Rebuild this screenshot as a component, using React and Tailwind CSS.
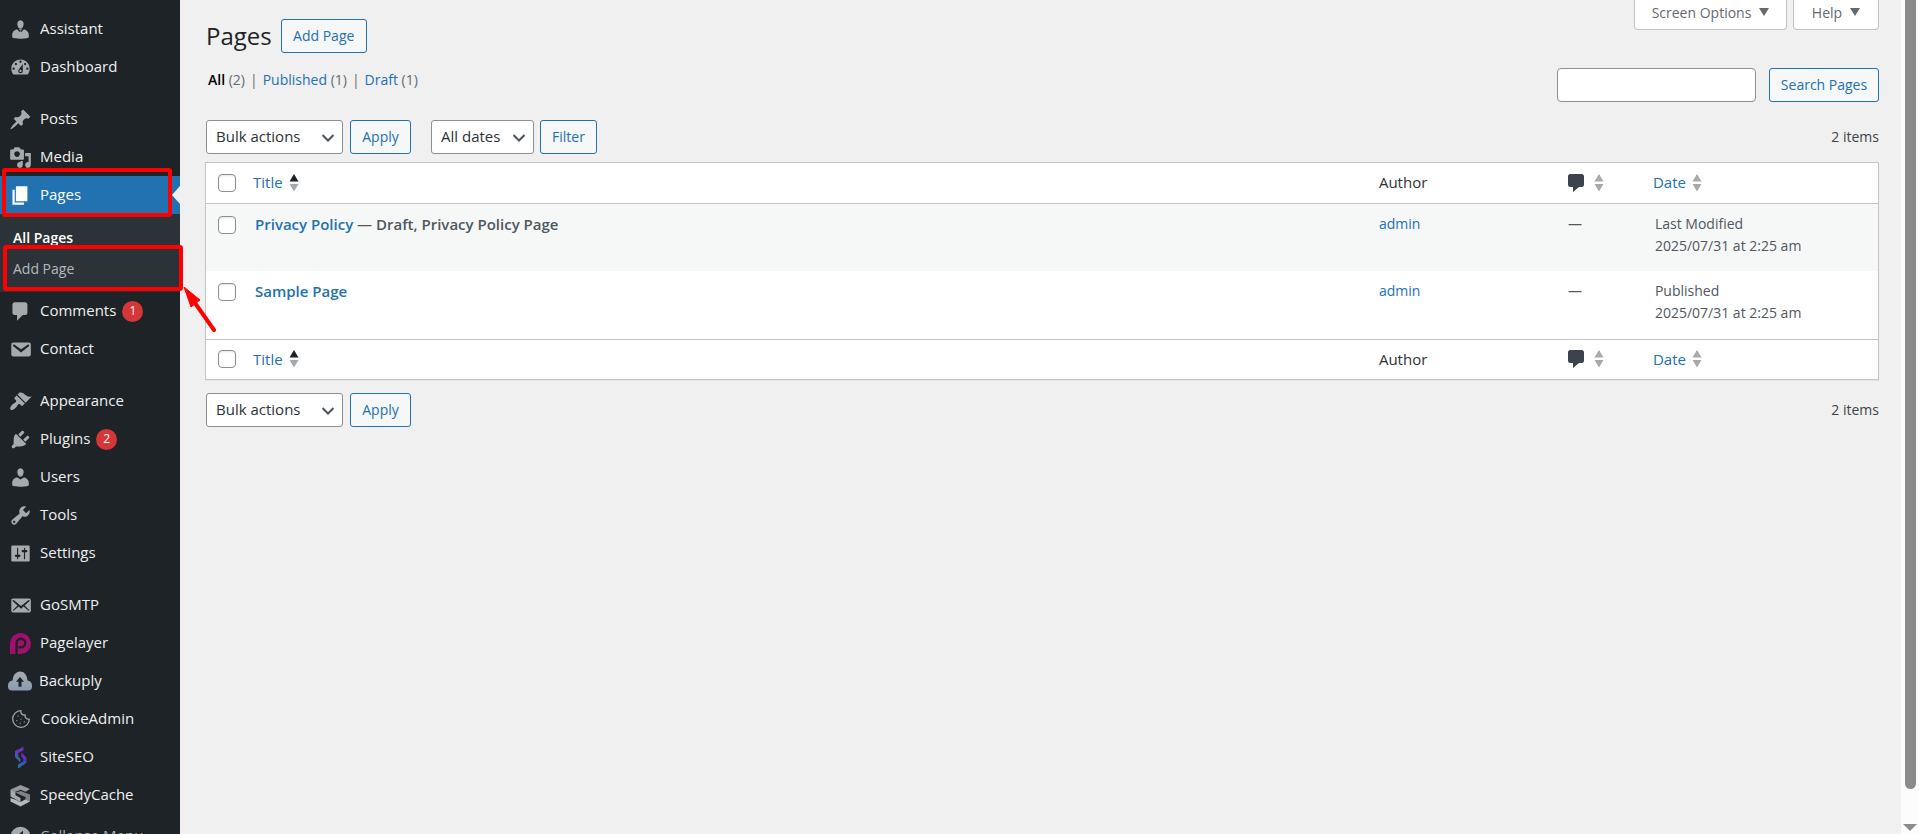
import React, { useState } from 'react';
import { Cookie } from 'lucide-react';

const iconPaths = {
  assistant:
    'M10 9.25c-2.27 0-2.73-3.44-2.73-3.44C7 4.02 7.82 2 9.97 2c2.16 0 2.98 2.02 2.71 3.81 0 0-.41 3.44-2.68 3.44zM7.2 10.05L9.3 12.2l.7-.6.7.6 2.1-2.15c2.3 0 4.44 2.28 4.44 4.48v2.49s-3.65 1.13-7.24 1.13c-3.65 0-7.24-1.13-7.24-1.13v-2.49c0-2.25 1.94-4.48 4.44-4.48zM8.6 9.9L10 11l1.4-1.1-.6-.2H9.2z',
  dashboard:
    'M3.76 16h12.48c1.1-1.37 1.76-3.11 1.76-5 0-4.42-3.58-8-8-8s-8 3.58-8 8c0 1.89.66 3.63 1.76 5zM10 4c.55 0 1 .45 1 1s-.45 1-1 1-1-.45-1-1 .45-1 1-1zM6 6c.55 0 1 .45 1 1s-.45 1-1 1-1-.45-1-1 .45-1 1-1zm8 0c.55 0 1 .45 1 1s-.45 1-1 1-1-.45-1-1 .45-1 1-1zm-5.37 5.55L12 7v6c0 1.1-.9 2-2 2s-2-.9-2-2c0-.57.24-1.08.63-1.45zM4 10c.55 0 1 .45 1 1s-.45 1-1 1-1-.45-1-1 .45-1 1-1zm12 0c.55 0 1 .45 1 1s-.45 1-1 1-1-.45-1-1 .45-1 1-1zm-5 3c0-.55-.45-1-1-1s-1 .45-1 1 .45 1 1 1 1-.45 1-1z',
  posts:
    'M10.44 3.02l1.82-1.82 6.36 6.35-1.83 1.82c-1.05-.68-2.48-.57-3.41.36l-.75.75c-.92.93-1.04 2.35-.35 3.41l-1.83 1.82-2.41-2.41-2.8 2.79c-.42.42-3.38 2.71-3.8 2.29s1.86-3.39 2.28-3.81l2.79-2.79L4.1 9.36l1.83-1.82c1.05.69 2.48.57 3.4-.36l.75-.75c.93-.92 1.05-2.35.36-3.41z',
  media:
    'M13 11V4c0-.55-.45-1-1-1h-1.67L9 1H5L3.67 3H2c-.55 0-1 .45-1 1v7c0 .55.45 1 1 1h10c.55 0 1-.45 1-1zM7 4.5c1.38 0 2.5 1.12 2.5 2.5S8.38 9.5 7 9.5 4.5 8.38 4.5 7 5.62 4.5 7 4.5zM14 6h5v10.5c0 1.38-1.12 2.5-2.5 2.5S14 17.88 14 16.5s1.12-2.5 2.5-2.5c.17 0 .34.02.5.05V9h-3V6zm-4 8.05V13h2v3.5c0 1.38-1.12 2.5-2.5 2.5S7 17.88 7 16.5 8.12 14 9.5 14c.17 0 .34.02.5.05z',
  pages: 'M6 15V2h10v13H6zm-1 1h8v2H3V5h2v11z',
  comments: 'M5 2h9c1.1 0 2 .9 2 2v7c0 1.1-.9 2-2 2h-2l-5 5v-5H5c-1.1 0-2-.9-2-2V4c0-1.1.9-2 2-2z',
  contact:
    'M3.87 4h13.25C18.37 4 19 4.59 19 5.79v8.42c0 1.19-.63 1.79-1.88 1.79H3.87c-1.25 0-1.88-.6-1.88-1.79V5.79c0-1.2.63-1.79 1.88-1.79zm6.62 8.6l6.74-5.53c.24-.2.43-.66.13-1.07-.29-.41-.82-.42-1.17-.17l-5.7 3.86L4.8 5.83c-.35-.25-.88-.24-1.17.17-.3.41-.11.87.13 1.07z',
  appearance:
    'M14.48 11.06L7.41 3.99l1.5-1.5c.5-.56 2.3-.47 3.51.32 1.21.8 1.43 1.28 2.91 2.1 1.18.64 2.45 1.26 4.45.85zm-.71.71L6.7 4.7 4.93 6.47c-.39.39-.39 1.02 0 1.41l1.06 1.06c.39.39.39 1.03 0 1.42-.6.6-1.43 1.11-2.21 1.69-.35.26-.7.53-1.01.84C1.43 14.23.4 16.08 1.4 17.07c.99 1 2.84-.03 4.18-1.36.31-.31.58-.66.85-1.02.57-.78 1.08-1.61 1.69-2.21.39-.39 1.02-.39 1.41 0l1.06 1.06c.39.39 1.02.39 1.41 0z',
  plugins:
    'M13.11 4.36L9.87 7.6 8 5.73l3.24-3.24c.35-.34 1.05-.2 1.56.32.52.51.66 1.21.31 1.55zm-8 1.77l.91-1.12 9.01 9.01-1.19.84c-.71.71-2.63 1.16-3.82 1.16H6.14L4.9 17.26c-.59.59-1.54.59-2.12 0-.59-.58-.59-1.53 0-2.12l1.24-1.24v-3.88c0-1.13.4-3.19 1.09-3.89zm7.26 3.97l3.24-3.24c.34-.35 1.04-.21 1.55.31.52.51.66 1.21.31 1.55l-3.24 3.25z',
  users:
    'M10 9.25c-2.27 0-2.73-3.44-2.73-3.44C7 4.02 7.82 2 9.97 2c2.16 0 2.98 2.02 2.71 3.81 0 0-.41 3.44-2.68 3.44zm0 2.57L12.72 10c2.39 0 4.52 2.33 4.52 4.53v2.49s-3.65 1.13-7.24 1.13c-3.65 0-7.24-1.13-7.24-1.13v-2.49c0-2.25 1.94-4.48 4.47-4.48z',
  tools:
    'M16.68 9.77c-1.34 1.34-3.3 1.67-4.95.99l-5.41 6.52c-.99.99-2.59.99-3.58 0s-.99-2.59 0-3.57l6.52-5.42c-.68-1.65-.35-3.61.99-4.95 1.28-1.28 3.12-1.62 4.72-1.06l-2.89 2.89 2.82 2.82 2.86-2.87c.53 1.58.18 3.39-1.08 4.65zM3.81 16.21c.4.39 1.04.39 1.43 0 .4-.4.4-1.04 0-1.43-.39-.4-1.03-.4-1.43 0-.39.39-.39 1.03 0 1.43z',
  settings:
    'M18 16V4c0-.55-.45-1-1-1H3c-.55 0-1 .45-1 1v12c0 .55.45 1 1 1h14c.55 0 1-.45 1-1zM8 11h1c.55 0 1 .45 1 1s-.45 1-1 1H8v1.5c0 .28-.22.5-.5.5s-.5-.22-.5-.5V13H6c-.55 0-1-.45-1-1s.45-1 1-1h1V5.5c0-.28.22-.5.5-.5s.5.22.5.5V11zm5-2h-1c-.55 0-1-.45-1-1s.45-1 1-1h1V5.5c0-.28.22-.5.5-.5s.5.22.5.5V7h1c.55 0 1 .45 1 1s-.45 1-1 1h-1v5.5c0 .28-.22.5-.5.5s-.5-.22-.5-.5V9z',
  gosmtp:
    'M19 14.5v-9c0-.83-.67-1.5-1.5-1.5H3.49c-.83 0-1.5.67-1.5 1.5v9c0 .83.67 1.5 1.5 1.5H17.5c.83 0 1.5-.67 1.5-1.5zm-1.31-9.11c.33.33.15.67-.03.84L13.6 9.95l3.9 4.06c.12.14.2.36.06.51-.13.16-.43.15-.56.05l-4.37-3.73-2.14 1.95-2.13-1.95-4.37 3.73c-.13.1-.43.11-.56-.05-.14-.15-.06-.37.06-.51l3.9-4.06-4.06-3.72c-.18-.17-.36-.51-.03-.84s.67-.17.95.07l6.24 5.04 6.25-5.04c.28-.24.62-.4.95-.07z',
  collapse: 'M10 1.5a8.5 8.5 0 1 0 0 17 8.5 8.5 0 0 0 0-17zM12.2 5v10L6.2 10z',
};

const Dashicon = ({ name }) => (
  <svg viewBox="0 0 20 20" className="w-[23px] h-[23px] shrink-0" fill="currentColor" fillRule="evenodd" aria-hidden="true">
    <path d={iconPaths[name]} />
  </svg>
);

const PagelayerIcon = () => (
  <svg viewBox="0 0 23 23" className="w-[23px] h-[23px] shrink-0" aria-hidden="true">
    <path d="M1 22V11.5a10.5 10.5 0 1 1 10.5 10.5z" fill="#a1106c" />
    <path d="M7.600 22.500V11a4.300 4.300 0 1 1 4.300 4.300H9.500" fill="none" stroke="#1d2327" strokeWidth="2.400" />
  </svg>
);

const BackuplyIcon = () => (
  <svg viewBox="0 0 24 24" className="w-6 h-6 -mx-px shrink-0" aria-hidden="true">
    <defs>
      <linearGradient id="backuply" x1="0" y1="0" x2="0" y2="1">
        <stop offset="0" stopColor="#a7aaad" />
        <stop offset="1" stopColor="#8c9bb0" />
      </linearGradient>
    </defs>
    <path
      d="M4 21.500a4 4 0 0 1-4-4V16c0-2.400 1.800-4.300 4.600-4.600C5 6 8 2.500 12 2.500s7.200 3.400 7.500 8.900c2.700.3 4.500 2.200 4.500 4.600v1.500a4 4 0 0 1-4 4z"
      fill="url(#backuply)"
    />
    <path d="M12 8l-4 4.700h2.500v5h3v-5H16z" fill="#1d2327" />
  </svg>
);

const SiteSeoIcon = () => (
  <svg viewBox="0 0 23 23" className="w-[23px] h-[23px] shrink-0" aria-hidden="true">
    <defs>
      <linearGradient id="seo-left" x1="0" y1="0" x2="0" y2="1">
        <stop offset="0" stopColor="#7b23b5" />
        <stop offset="1" stopColor="#1383a0" />
      </linearGradient>
      <linearGradient id="seo-right" x1="0" y1="0" x2="0" y2="1">
        <stop offset="0" stopColor="#8b22c0" />
        <stop offset=".5" stopColor="#4a35c4" />
        <stop offset="1" stopColor="#14909b" />
      </linearGradient>
    </defs>
    <path d="M14.500.500v3.800L9.300 7v3.500l2 2.500v3.500L6 11V5z" fill="url(#seo-left)" />
    <path d="M12.500 6.500l5 5.300v5L9 22.500v-4l5.200-3v-3l-2-2z" fill="url(#seo-right)" />
  </svg>
);

const SpeedyCacheIcon = () => (
  <svg viewBox="0 0 23 23" className="w-[23px] h-[23px] shrink-0" aria-hidden="true">
    <path d="M11.500 1L21 5l-4.500 2.800-5-2-5 2-5-2.300z" fill="#97999c" />
    <path d="M1.500 5.500l5 2.300v3.400L11.500 14v4L1.500 12.500z" fill="#a7aaad" />
    <path d="M6.500 8.500l5-1.500 9.500 3.500v7l-4.500-2.300V13l-5-2z" fill="#7f8286" />
    <path d="M1.500 14l5 1.800 5 2.200 5-2.800 4.500 2.300-9.500 5-10-5z" fill="#b6b8bb" />
  </svg>
);

const CookieIcon = () => <Cookie className="w-5 h-5 mx-0.5 shrink-0" strokeWidth={1.5} />;

const menuGroups = [
  [
    { label: 'Assistant', icon: <Dashicon name="assistant" /> },
    { label: 'Dashboard', icon: <Dashicon name="dashboard" /> },
  ],
  [
    { label: 'Posts', icon: <Dashicon name="posts" /> },
    { label: 'Media', icon: <Dashicon name="media" /> },
    { label: 'Pages', icon: <Dashicon name="pages" />, current: true },
    { label: 'Comments', icon: <Dashicon name="comments" />, count: 1 },
    { label: 'Contact', icon: <Dashicon name="contact" /> },
  ],
  [
    { label: 'Appearance', icon: <Dashicon name="appearance" /> },
    { label: 'Plugins', icon: <Dashicon name="plugins" />, count: 2 },
    { label: 'Users', icon: <Dashicon name="users" /> },
    { label: 'Tools', icon: <Dashicon name="tools" /> },
    { label: 'Settings', icon: <Dashicon name="settings" /> },
  ],
  [
    { label: 'GoSMTP', icon: <Dashicon name="gosmtp" /> },
    { label: 'Pagelayer', icon: <PagelayerIcon /> },
    { label: 'Backuply', icon: <BackuplyIcon /> },
    { label: 'CookieAdmin', icon: <CookieIcon /> },
    { label: 'SiteSEO', icon: <SiteSeoIcon /> },
    { label: 'SpeedyCache', icon: <SpeedyCacheIcon /> },
  ],
];

const rows = [
  { id: 1, title: 'Privacy Policy', state: 'Draft, Privacy Policy Page', author: 'admin', status: 'Last Modified', date: '2025/07/31 at 2:25 am' },
  { id: 2, title: 'Sample Page', author: 'admin', status: 'Published', date: '2025/07/31 at 2:25 am' },
];

const buttonClass = 'h-[34px] border border-[#2271b1] rounded-[3px] bg-[#f6f7f7] text-[#2271b1] text-sm whitespace-nowrap';

const PagesSubmenu = () => (
  <ul className="relative bg-[#2c3338] py-2 text-sm">
    <li>
      <a href="#all-pages" className="flex items-center h-[31px] px-[13px] font-semibold text-white">All Pages</a>
    </li>
    <li className="relative">
      <a href="#add-page" className="flex items-center h-[31px] px-[13px] text-[#b4b9be]">Add Page</a>
      <span className="absolute left-[3px] -right-[3px] -top-[8px] -bottom-[7px] border-4 border-[#ff0000] rounded-[3px] z-10 pointer-events-none" />
      <svg viewBox="0 0 34 46" className="absolute left-[182px] top-[34px] w-[34px] h-[46px] z-10 pointer-events-none" aria-hidden="true">
        <path d="M13 16l19 27" stroke="#ff0000" strokeWidth="4" strokeLinecap="round" />
        <path d="M2 0l16 13-9 7z" fill="#ff0000" stroke="#ff0000" strokeWidth="1" />
      </svg>
    </li>
  </ul>
);

const MenuItem = ({ item }) => (
  <li>
    <a
      href={`#${item.label.toLowerCase()}`}
      className={`relative flex items-center gap-2 h-[38px] pl-[9px] text-[15px] ${item.current ? 'bg-[#2271b1] text-white' : 'text-[#f0f0f1]'}`}
    >
      <span className={item.current ? 'text-white' : 'text-[#a7aaad]'}>{item.icon}</span>
      {item.label}
      {item.count && (
        <span className="flex items-center justify-center -ml-0.5 w-[21px] h-[21px] rounded-full bg-[#d63638] text-white text-xs">{item.count}</span>
      )}
      {item.current && (
        <>
          <svg viewBox="0 0 8 18" className="absolute right-0 top-2.5 w-2 h-[18px]" aria-hidden="true">
            <path d="M8 0v18L0 9z" fill="#f0f0f0" />
          </svg>
          <span className="absolute left-0.5 right-2 -top-2 -bottom-[3px] border-4 border-[#ff0000] rounded-[3px] z-10 pointer-events-none" />
        </>
      )}
    </a>
    {item.current && <PagesSubmenu />}
  </li>
);

const Sidebar = () => (
  <nav className="w-[180px] shrink-0 bg-[#1d2327] pt-2.5" aria-label="Main menu">
    {menuGroups.map((group, idx) => (
      <ul key={idx} className={idx > 0 ? 'mt-3.5' : ''}>
        {group.map((item) => (
          <MenuItem key={item.label} item={item} />
        ))}
      </ul>
    ))}
    <button className="flex items-center gap-2 h-11 pl-[9px] text-[15px] text-[#a7aaad]">
      <Dashicon name="collapse" />
      Collapse Menu
    </button>
  </nav>
);

const Dropdown = ({ label, options, className }) => (
  <div className={`relative ${className}`}>
    <select
      aria-label={label}
      className="appearance-none w-full h-[34px] pl-[9px] pr-6 border border-[#8c8f94] rounded-[3px] bg-white text-[#2c3338] text-[15px]"
    >
      {options.map((option) => (
        <option key={option}>{option}</option>
      ))}
    </select>
    <svg viewBox="0 0 12 8" className="absolute right-[9px] top-[14px] w-3 h-2 pointer-events-none" aria-hidden="true">
      <path d="M.5 1L6 6.500 11.500 1" fill="none" stroke="#50575e" strokeWidth="2" />
    </svg>
  </div>
);

const BulkActions = () => (
  <>
    <Dropdown label="Select bulk action" options={['Bulk actions', 'Edit', 'Move to Trash']} className="w-[137px]" />
    <button className={`${buttonClass} w-[61px] ml-[7px]`}>Apply</button>
  </>
);

const SortArrows = ({ active }) => (
  <svg viewBox="0 0 10 18" className="w-2.5 h-[18px]" aria-hidden="true">
    <path d="M5 0l4.500 7.500h-9z" fill={active ? '#1d2327' : '#a7aaad'} />
    <path d="M5 17.500L.5 10h9z" fill="#a7aaad" />
  </svg>
);

const Checkbox = ({ label, checked, onChange }) => (
  <input
    type="checkbox"
    aria-label={label}
    checked={checked}
    onChange={onChange}
    className="block appearance-none w-[18px] h-[18px] ml-3 border border-[#8c8f94] rounded-[4px] bg-white shadow-[inset_0_1px_2px_rgba(0,0,0,0.1)] checked:bg-[#2271b1]"
  />
);

const HeadingRow = ({ checked, onToggle }) => (
  <tr className="h-10 text-left text-[15px]">
    <td>
      <Checkbox label="Select all" checked={checked} onChange={onToggle} />
    </td>
    <th scope="col" className="pl-[9px] font-normal">
      <a href="#title" className="flex items-center gap-1.5 text-[#2271b1]">Title <SortArrows active /></a>
    </th>
    <th scope="col" className="pl-[11px] font-normal text-[#2c3338]">Author</th>
    <th scope="col" className="pl-[9px] font-normal">
      <a href="#comments-order" aria-label="Comments" className="flex items-center gap-2.5">
        <svg viewBox="0 0 16 18" className="w-4 h-[18px]" aria-hidden="true">
          <path d="M2.500 0h11A2.500 2.500 0 0 1 16 2.500v8a2.500 2.500 0 0 1-2.500 2.500H11l-6 5v-5H2.500A2.500 2.500 0 0 1 0 10.500v-8A2.500 2.500 0 0 1 2.500 0z" fill="#3c434a" />
        </svg>
        <SortArrows />
      </a>
    </th>
    <th scope="col" className="pl-[9px] font-normal">
      <a href="#date" className="flex items-center gap-1.5 text-[#2271b1]">Date <SortArrows /></a>
    </th>
  </tr>
);

const PagesTable = () => {
  const [selected, setSelected] = useState([]);
  const allSelected = selected.length === rows.length;

  const toggleAll = () => setSelected(allSelected ? [] : rows.map((row) => row.id));
  const toggleRow = (id) =>
    setSelected(selected.includes(id) ? selected.filter((item) => item !== id) : [...selected, id]);

  return (
    <div className="mt-2 -ml-px border border-[#c3c4c7] bg-white shadow-[0_1px_1px_rgba(0,0,0,0.04)]">
      <table className="w-full table-fixed border-collapse">
        <colgroup>
          <col className="w-[38px]" />
          <col />
          <col className="w-[191px]" />
          <col className="w-[85px]" />
          <col className="w-[14%]" />
        </colgroup>
        <thead className="border-b border-[#c3c4c7]">
          <HeadingRow checked={allSelected} onToggle={toggleAll} />
        </thead>
        <tbody>
          {rows.map((row) => (
            <tr key={row.id} className="h-[68px] align-top text-sm leading-[22px] text-[#50575e] odd:bg-[#f6f7f7]">
              <td className="pt-3">
                <Checkbox label={`Select ${row.title}`} checked={selected.includes(row.id)} onChange={() => toggleRow(row.id)} />
              </td>
              <td className="pt-[9px] pl-[11px] text-[15px] font-semibold">
                <a href={`#page-${row.id}`} className="text-[#2271b1]">{row.title}</a>
                {row.state && <span> — {row.state}</span>}
              </td>
              <td className="pt-[9px] pl-[11px]">
                <a href="#admin" className="text-[#2271b1]">{row.author}</a>
              </td>
              <td className="pt-[9px] pl-[9px]">—</td>
              <td className="pt-[9px] pl-[11px]">
                {row.status}
                <br />
                {row.date}
              </td>
            </tr>
          ))}
        </tbody>
        <tfoot className="border-t border-[#c3c4c7]">
          <HeadingRow checked={allSelected} onToggle={toggleAll} />
        </tfoot>
      </table>
    </div>
  );
};

const ScreenTab = ({ children, className }) => (
  <button
    className={`flex items-center justify-center gap-2 h-[30px] pb-1 border border-t-0 border-[#c3c4c7] rounded-b-[4px] bg-white text-sm text-[#646970] ${className}`}
  >
    {children}
    <svg viewBox="0 0 10 8" className="w-2.5 h-2 -mt-0.5" aria-hidden="true">
      <path d="M0 0h10L5 8z" fill="#646970" />
    </svg>
  </button>
);

const App = () => {
  return (
    <div className="flex h-screen overflow-hidden bg-[#f0f0f0] font-['Open_Sans',sans-serif] text-sm text-[#3c434a]">
      <Sidebar />

      <main className="flex-1 min-w-0 pl-[26px] pr-[22px]">
        <div className="flex justify-between">
          <div className="flex items-center gap-[9px] pt-[19px]">
            <h1 className="text-2xl leading-[34px] text-[#1d2327]">Pages</h1>
            <button className={`${buttonClass} w-[86px]`}>Add Page</button>
          </div>
          <div className="flex items-start gap-1.5">
            <ScreenTab className="w-[153px]">Screen Options</ScreenTab>
            <ScreenTab className="w-[86px]">Help</ScreenTab>
          </div>
        </div>

        <div className="flex items-start justify-between pt-[15px]">
          <ul className="flex items-center gap-[5px] pl-0.5 h-6 text-[#646970]">
            <li><a href="#all" className="font-semibold text-black">All</a> (2)</li>
            <li>|</li>
            <li><a href="#published" className="text-[#2271b1]">Published</a> (1)</li>
            <li>|</li>
            <li><a href="#draft" className="text-[#2271b1]">Draft</a> (1)</li>
          </ul>
          <div className="flex gap-[13px]">
            <input type="search" aria-label="Search Pages" className="w-[199px] h-[34px] px-2 border border-[#8c8f94] rounded-[4px] bg-white" />
            <button className={`${buttonClass} w-[110px]`}>Search Pages</button>
          </div>
        </div>

        <div className="flex items-center mt-[18px]">
          <BulkActions />
          <Dropdown label="Filter by date" options={['All dates', 'July 2025']} className="w-[103px] ml-5" />
          <button className={`${buttonClass} w-[57px] ml-1.5`}>Filter</button>
          <span className="ml-auto">2 items</span>
        </div>

        <PagesTable />

        <div className="flex items-center mt-[13px]">
          <BulkActions />
          <span className="ml-auto">2 items</span>
        </div>
      </main>

      {/* Scroll track */}
      <div className="flex flex-col items-center justify-between w-[18px] shrink-0 bg-[#fcfcfc] pb-[3px]">
        <div className="w-[11px] h-[calc(100%-42px)] rounded-b-full bg-[#8b8b8b]" />
        <svg viewBox="0 0 14 7" className="w-3.5 h-[7px]" aria-hidden="true">
          <path d="M0 0h14L7 7z" fill="#8b8b8b" />
        </svg>
      </div>
    </div>
  );
};

export default App;
